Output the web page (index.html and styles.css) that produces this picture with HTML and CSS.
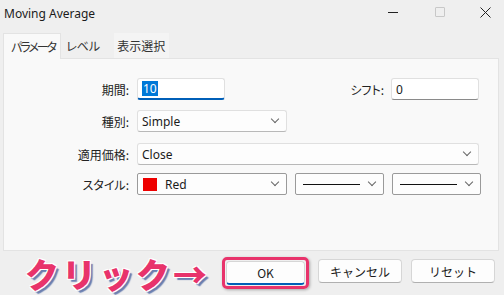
FILE: index.html
```html
<!DOCTYPE html>
<html lang="ja">
<head>
	<meta charset="UTF-8">
	<title>Moving Average</title>
	<link rel="stylesheet" href="styles.css">
</head>
<body>
	<div class="window">
		<!-- Title bar -->
		<div class="titlebar">
			<span class="title">Moving Average</span>
			<div class="controls">
				<span class="ctl ctl-min"></span>
				<span class="ctl ctl-max"></span>
				<span class="ctl ctl-close">
					<svg width="11" height="11" viewBox="0 0 11 11"><path d="M0.5 0.5 L10.5 10.5 M10.5 0.5 L0.5 10.5" stroke="#222" stroke-width="1" fill="none"/></svg>
				</span>
			</div>
		</div>

		<!-- Tabs -->
		<div class="tabs">
			<div class="tab active">パラメータ</div>
			<div class="tab">レベル</div>
			<div class="tab tab-hover">表示選択</div>
		</div>

		<!-- Parameters panel -->
		<div class="panel">
			<div class="row row-period">
				<label class="lbl">期間:</label>
				<div class="input focused w-short"><span class="sel-text">10</span></div>
				<div class="spacer"></div>
				<label class="lbl lbl-shift">シフト:</label>
				<div class="input w-short"><span>0</span></div>
			</div>
			<div class="row row-kind">
				<label class="lbl">種別:</label>
				<div class="select w-mid"><span>Simple</span><i class="chev"></i></div>
			</div>
			<div class="row row-price">
				<label class="lbl">適用価格:</label>
				<div class="select w-full"><span>Close</span><i class="chev"></i></div>
			</div>
			<div class="row row-style">
				<label class="lbl">スタイル:</label>
				<div class="select dark w-mid"><span class="swatch"></span><span>Red</span><i class="chev"></i></div>
				<div class="select dark w-line"><span class="line"></span><i class="chev"></i></div>
				<div class="select dark w-line"><span class="line"></span><i class="chev"></i></div>
			</div>
		</div>

		<!-- Buttons -->
		<div class="footer">
			<div class="callout">クリック→</div>
			<div class="btn-ring"><button class="btn btn-ok">OK</button></div>
			<button class="btn">キャンセル</button>
			<button class="btn">リセット</button>
		</div>
	</div>
</body>
</html>
```

FILE: styles.css
```css
body {
	margin: 0;
	padding: 0;
	background-color: #ffffff;
	font-family: "Noto Sans", "Noto Sans CJK JP", sans-serif;
	font-size: 12px;
	color: #1b1b1b;
	font-feature-settings: "palt";
}

.window {
	width: 504px;
	background-color: #efefef;
}

/* Title bar */
.titlebar {
	height: 30px;
	display: flex;
	align-items: center;
	padding-left: 4px;
}

.title {
	font-size: 12px;
	margin-top: -4px;
}

.controls {
	margin-left: auto;
	display: flex;
	align-items: center;
	margin-top: -6px;
}

.ctl {
	display: block;
}

.ctl-min {
	width: 10px;
	height: 1px;
	background-color: #222;
	margin-right: 37px;
}

.ctl-max {
	width: 8px;
	height: 8px;
	border: 1px solid #c8c8c8;
	border-radius: 1px;
	margin-right: 35px;
}

.ctl-close {
	width: 11px;
	height: 11px;
	margin-right: 13px;
}

.ctl-close svg {
	display: block;
}

/* Tabs */
.tabs {
	display: flex;
	align-items: flex-end;
	height: 28px;
	padding-left: 3px;
}

.tab {
	height: 25px;
	line-height: 25px;
	padding: 0 6px 0 5px;
	font-size: 12px;
	color: #333;
	font-family: "Noto Sans CJK JP", sans-serif;
}

.tab.active {
	height: 25px;
	line-height: 26px;
	padding: 0 5px 0 7px;
	letter-spacing: -2px;
	background-color: #f9f9f9;
	border: 1px solid #e3e3e3;
	border-bottom: none;
	margin-bottom: -1px;
	position: relative;
	z-index: 1;
}

.tab-hover {
	background-color: #f4f4f4;
	margin-left: 8px;
	padding: 0 4px 0 3px;
}

/* Panel */
.panel {
	margin: 0 5px 0 3px;
	height: 193px;
	background-color: #f9f9f9;
	border: 1px solid #e3e3e3;
	padding-top: 19px;
	box-sizing: border-box;
}

.row {
	display: flex;
	align-items: center;
	height: 22px;
}

.row-kind { margin-top: 10px; }
.row-price { margin-top: 11px; }
.row-style { margin-top: 8px; }

.lbl {
	width: 125px;
	text-align: right;
	padding-right: 8px;
	font-family: "Noto Sans CJK JP", sans-serif;
	font-size: 12px;
	color: #222;
}

.lbl-shift {
	width: auto;
	padding-right: 7px;
}

.spacer {
	flex: 1;
}

.input,
.select {
	height: 22px;
	box-sizing: border-box;
	background-color: #ffffff;
	border: 1px solid #e0e0e0;
	border-bottom-color: #8a8a8a;
	border-radius: 3px;
	display: flex;
	align-items: center;
	padding-left: 4px;
	font-size: 12px;
}

.input.focused {
	border-bottom: 2px solid #005fb8;
}

.sel-text {
	background-color: #0078d7;
	color: #fff;
	padding: 0 1px;
	line-height: 15px;
}

.w-short { width: 88px; }
.w-mid { width: 150px; }
.w-full { width: 342px; }
.w-line { width: 89px; margin-left: 8px; }

.row-period .input:last-child {
	margin-right: 19px;
}

.select {
	background-color: #fdfdfd;
	border-color: #e0e0e0;
	border-bottom-color: #b8b8b8;
}

.select.dark {
	border: 1px solid #9a9a9a;
	border-radius: 2px;
}

.chev {
	margin-left: auto;
	margin-right: 8px;
	width: 5px;
	height: 5px;
	border-right: 1px solid #666;
	border-bottom: 1px solid #666;
	transform: rotate(45deg);
	margin-top: -4px;
}

.swatch {
	width: 14px;
	height: 13px;
	background-color: #ee0000;
	margin-right: 8px;
	margin-left: 1px;
}

.line {
	width: 57px;
	height: 1px;
	background-color: #111;
	margin-left: 3px;
}

/* Footer */
.footer {
	height: 38px;
	display: flex;
	align-items: flex-start;
	padding-top: 6px;
	padding-right: 9px;
}

.callout {
	font-family: "Noto Sans CJK JP", sans-serif;
	font-weight: 900;
	font-size: 34px;
	line-height: 34px;
	letter-spacing: 3px;
	color: #e8336b;
	margin-left: 25px;
	width: 197px;
	white-space: nowrap;
	font-feature-settings: normal;
	text-shadow:
		-1px -1px 0 #fff, 1px -1px 0 #fff, -1px 1px 0 #fff, 1px 1px 0 #fff,
		3px 3px 1px #6a7fb0;
}

.btn-ring {
	border: 3px solid #e8336b;
	border-radius: 5px;
	padding: 1px;
	box-shadow: 1px 1px 3px rgba(0, 0, 0, 0.3);
	display: flex;
}

.btn {
	width: 84px;
	height: 24px;
	box-sizing: border-box;
	background-color: #fdfdfd;
	border: 1px solid #d6d6d6;
	border-bottom-color: #b0b0b0;
	border-radius: 4px;
	font-family: "Noto Sans CJK JP", sans-serif;
	font-size: 12px;
	color: #1b1b1b;
	margin-left: 9px;
	margin-top: 2px;
	padding: 0;
}

.btn-ok {
	width: 79px;
	margin: 0;
	border-bottom: 2px solid #005fb8;
}
```
